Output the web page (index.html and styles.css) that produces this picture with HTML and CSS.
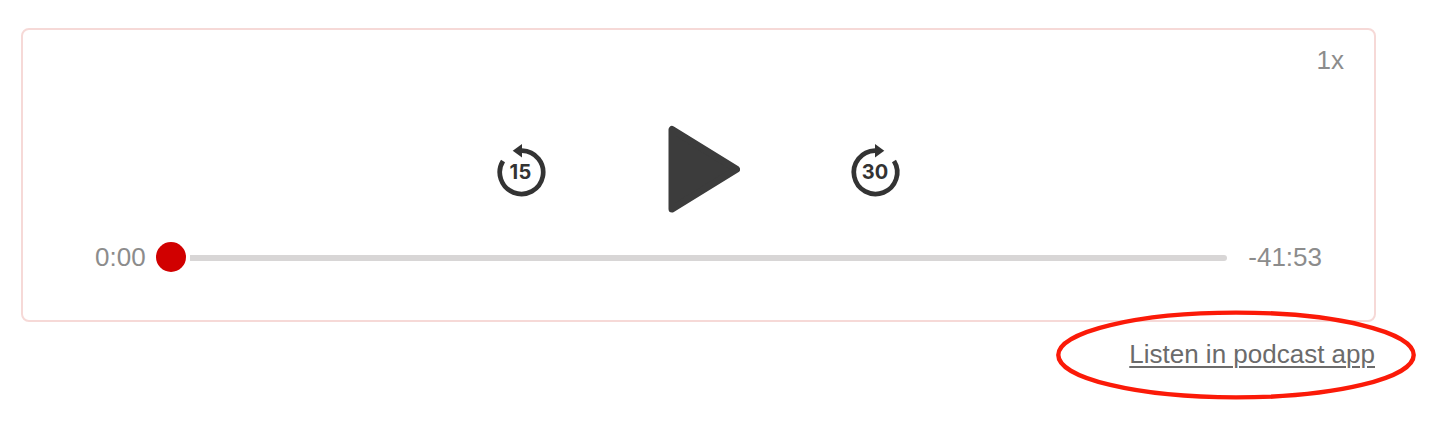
FILE: index.html
```html
<!DOCTYPE html>
<html lang="en">
<head>
    <meta charset="UTF-8">
    <meta name="viewport" content="width=device-width, initial-scale=1.0">
    <title>Podcast player</title>
    <link rel="stylesheet" href="styles.css">
</head>
<body>
    <div class="player">
        <div class="speed">1x</div>
        <div class="controls">
            <svg class="skip" viewBox="0 0 48 54">
                <path class="ring" d="M5 18.9A21.7 21.7 0 1 0 24 8.6"/>
                <path d="M14.7 8.7L24 2v13.4z"/>
                <text x="22.7" y="37" letter-spacing="0.6">15</text>
            </svg>
            <svg class="play" viewBox="0 0 72 88">
                <path d="M4 4.5v79.5l64.5-39.7z"/>
            </svg>
            <svg class="skip" viewBox="0 0 48 54">
                <path class="ring" d="M43 18.9A21.7 21.7 0 1 1 24 8.6"/>
                <path d="M33.3 8.7L24 2v13.4z"/>
                <text x="24" y="37">30</text>
            </svg>
        </div>
        <div class="timeline">
            <span class="time">0:00</span>
            <span class="knob"></span>
            <span class="track"></span>
            <span class="time">-41:53</span>
        </div>
    </div>
    <div class="footer">
        <a class="app-link" href="#">Listen in podcast app</a>
        <svg class="circle" viewBox="0 0 360 90">
            <ellipse cx="180" cy="45" rx="177.7" ry="42.4"/>
        </svg>
    </div>
</body>
</html>
```

FILE: styles.css
```css
* {
    box-sizing: border-box;
}
body {
    margin: 0;
    min-height: 100vh;
    padding: 28px 80px 0 21px;
    background: #fff;
    font-family: "Liberation Sans", Arial, sans-serif;
    font-size: 26px;
    line-height: 30px;
}
.player {
    height: 294px;
    border: 2px solid #f6d9d7;
    border-radius: 8px;
}
.speed {
    padding: 15px 30px 0 0;
    text-align: right;
    color: #8c8c8c;
}
.controls {
    display: flex;
    justify-content: center;
    align-items: center;
    height: 88px;
    margin-top: 50px;
    padding-right: 1px;
}
.skip {
    width: 48px;
    height: 54px;
    fill: #333;
    overflow: visible;
}
.skip .ring {
    fill: none;
    stroke: #333;
    stroke-width: 4.7;
}
.skip text {
    font-family: Inter, sans-serif;
    font-size: 20px;
    font-weight: 700;
    text-anchor: middle;
}
.play {
    width: 72px;
    height: 88px;
    margin: 0 111px 0 122px;
    fill: #3c3c3c;
    stroke: #3c3c3c;
    stroke-width: 7;
    stroke-linejoin: round;
}
.timeline {
    display: flex;
    align-items: center;
    height: 30px;
    margin-top: 29px;
    padding: 0 52px 0 72px;
    color: #8c8c8c;
}
.knob {
    width: 30px;
    height: 30px;
    margin: 0 4px 0 10px;
    border-radius: 50%;
    background: #d10000;
}
.track {
    flex: 1;
    height: 6px;
    margin: 1px 21px 0 0;
    border-radius: 0 3px 3px 0;
    background: #d8d6d6;
}
.footer {
    position: relative;
    padding: 17px 1px 0 0;
    text-align: right;
}
.app-link {
    color: #6b6b6b;
    text-decoration-thickness: 2px;
    text-underline-offset: 3px;
}
/* hand-drawn highlight over the link */
.circle {
    position: absolute;
    top: -12px;
    right: -40px;
    width: 360px;
    height: 90px;
    fill: none;
    stroke: #fb1a08;
    stroke-width: 4.4;
    pointer-events: none;
}
```
